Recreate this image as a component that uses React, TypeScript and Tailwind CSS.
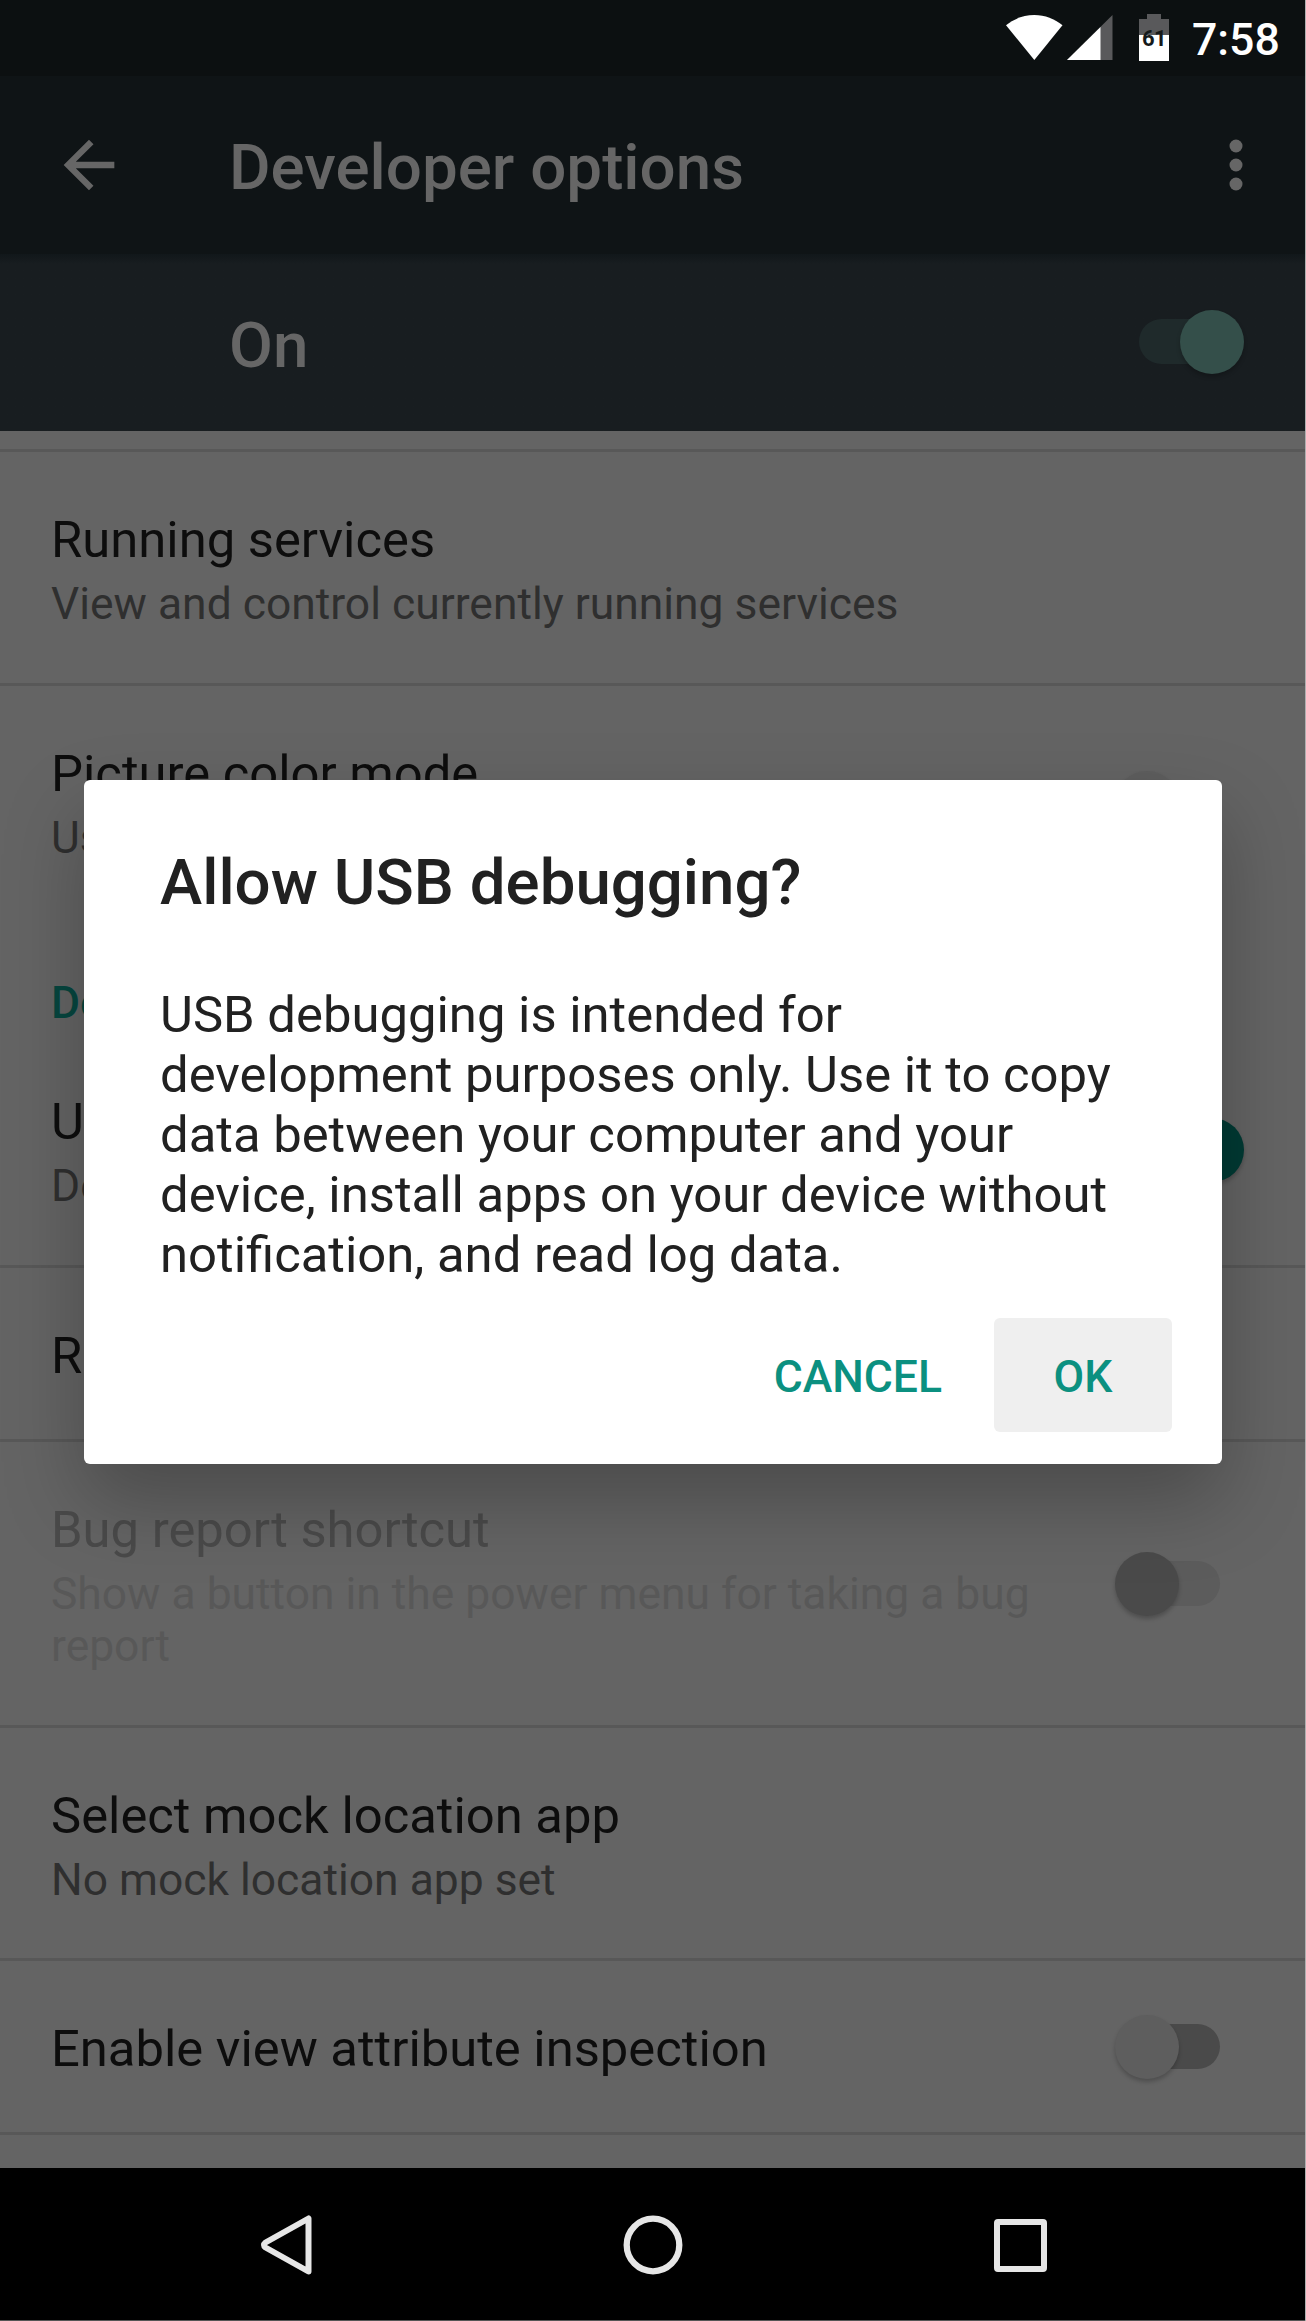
import React from "react";

type SwitchState = "header" | "on" | "off" | "disabled";

const thumbStyles: Record<SwitchState, string> = {
  header: "left-[65px] bg-[#344f4a]",
  on: "left-[65px] bg-[#003a34]",
  off: "left-0 bg-[#5e5e5e]",
  disabled: "left-0 bg-[#4a4a4a]",
};

const trackStyles: Record<SwitchState, string> = {
  header: "bg-[#1f2a2b]",
  on: "bg-[#4a5a58]",
  off: "bg-[#4a4a4a]",
  disabled: "bg-[#5c5c5c]",
};

function Switch({ state }: { state: SwitchState }) {
  return (
    <div className="relative h-16 w-[129px] shrink-0">
      <div className={`absolute top-[9px] left-[24px] h-[45px] w-[81px] rounded-full ${trackStyles[state]}`} />
      <div
        className={`absolute top-0 size-16 rounded-full shadow-[0_3px_4px_rgba(0,0,0,0.22)] ${thumbStyles[state]}`}
      />
    </div>
  );
}

interface RowProps {
  title: string;
  summary?: string;
  toggle?: SwitchState;
  disabled?: boolean;
  className: string;
}

function Row({ title, summary, toggle, disabled, className }: RowProps) {
  return (
    <div className={`flex shrink-0 justify-between border-[#585858] pr-[61px] pl-[51px] ${className}`}>
      <div className="w-[1010px] pt-[58px]">
        <div className={`text-[50.75px] leading-[60px] ${disabled ? "text-[#4a4a4a]" : "text-[#0d0d0d]"}`}>{title}</div>
        {summary && (
          <div className={`mt-2 text-[44.4px] leading-[52px] ${disabled ? "text-[#585858]" : "text-[#2f2f2f]"}`}>
            {summary}
          </div>
        )}
      </div>
      {toggle && (
        <div className="flex items-center">
          <Switch state={toggle} />
        </div>
      )}
    </div>
  );
}

function StatusBar() {
  return (
    <div className="flex h-[76px] bg-[#0c1011] pl-[1006px]">
      <svg className="mt-[15px] h-[46px] w-[57px]" viewBox="0 0 57 46" fill="#fff">
        <path d="M28.3 45 0 10.3C8 3.8 17.5 0 28.3 0S48.500 3.800 56.500 10.300Z" />
      </svg>
      <svg className="mt-[15px] ml-[4px] h-[45px] w-[46px]" viewBox="0 0 46 45">
        <path d="M0 45 45.500 0V45Z" fill="#59595b" />
        <path d="M0 45 33.500 12V45Z" fill="#fff" />
      </svg>
      <div className="relative mt-[14px] ml-[26px] h-[47px] w-[30px]">
        <svg className="h-[47px] w-[30px]" viewBox="0 0 30 47">
          <path d="M0 5H8V0H22V5H30V21H0Z" fill="#59595b" />
          <path d="M0 21H30V47H0Z" fill="#fff" />
        </svg>
        <span className="absolute top-[12px] left-[3px] text-[22px] leading-[26px] font-bold tracking-[-0.5px] text-[#15191a]">
          61
        </span>
      </div>
      <span className="mt-[14px] ml-[23px] text-[44.6px] leading-[52px] font-medium text-white">7:58</span>
    </div>
  );
}

function AppBar() {
  return (
    <div className="flex h-[178px] items-start bg-[#0f1416] pl-[51px]">
      <svg className="mt-[51px] size-[76px]" viewBox="0 0 24 24" fill="#666">
        <path d="M20 11H7.830l5.590-5.590L12 4l-8 8 8 8 1.410-1.410L7.830 13H20v-2z" />
      </svg>
      <h1 className="mt-[55px] ml-[102px] text-[63.7px] leading-[74px] font-medium text-[#666]">Developer options</h1>
      <svg className="mt-[51px] mr-[31px] ml-auto size-[76px]" viewBox="0 0 24 24" fill="#666">
        <circle cx="12" cy="6" r="2.050" />
        <circle cx="12" cy="12" r="2.050" />
        <circle cx="12" cy="18" r="2.050" />
      </svg>
    </div>
  );
}

function MasterSwitchBar() {
  return (
    <div className="flex h-[177px] items-center justify-between bg-[#181d20] bg-linear-to-b from-[#11171a] to-[#181d20] to-[10px] pr-[61px] pb-[2px] pl-[229px]">
      <span className="pt-[8px] text-[63.7px] leading-[74px] font-medium text-[#666]">On</span>
      <Switch state="header" />
    </div>
  );
}

function NavigationBar() {
  return (
    <div className="flex h-[153px] items-center justify-between border-b border-[#555] bg-black pt-[2px] pr-[258px] pl-[260px]">
      <svg className="h-[62px] w-[52px]" viewBox="0 0 52 62" fill="none" stroke="#e6e6e6" strokeWidth="6" strokeLinejoin="round">
        <path d="M48.500 4.500V57.500L5.500 33.500Q2.500 31 5.500 28.500Z" />
      </svg>
      <svg className="size-[60px]" viewBox="0 0 60 60" fill="none" stroke="#e6e6e6" strokeWidth="6.300">
        <circle cx="30" cy="30" r="26.300" />
      </svg>
      <div className="size-[53px] rounded-[4px] border-[6px] border-[#e6e6e6]" />
    </div>
  );
}

function Dialog() {
  return (
    <div
      role="dialog"
      className="absolute top-[780px] left-[84px] flex h-[684px] w-[1138px] flex-col rounded-[6px] bg-white px-[76px] pt-[66px] text-[#212121] shadow-[0_36px_80px_rgba(0,0,0,0.26)]"
    >
      <h2 className="text-[63.6px] leading-[74px] font-medium">Allow USB debugging?</h2>
      <p className="mt-[65px] w-[985px] text-[50.8px] leading-[60px]">
        USB debugging is intended for development purposes only. Use it to copy data between your computer and your
        device, install apps on your device without notification, and read log data.
      </p>
      <div className="mt-[33px] -mr-[26px] flex h-[114px] justify-end gap-[28px] text-[44.5px] leading-[52px] font-medium text-[#0b9080]">
        <button className="flex items-center px-[24px] pt-[4px]">CANCEL</button>
        <button className="flex w-[178px] items-center justify-center rounded-[6px] bg-[#efefef] pt-[4px]">OK</button>
      </div>
    </div>
  );
}

export default function App() {
  return (
    <div className="relative flex h-[2321px] w-[1306px] flex-col overflow-hidden border-r border-[#b0b0b0] bg-[#646464] font-['Roboto',sans-serif]">
      <StatusBar />
      <AppBar />
      <MasterSwitchBar />
      <div className="flex h-[1737px] flex-col overflow-hidden">
        <div className="h-[21px] shrink-0 border-b-[3px] border-[#585858]" />
        <Row
          className="h-[234px] border-b-[3px]"
          title="Running services"
          summary="View and control currently running services"
        />
        <Row className="h-[234px]" title="Picture color mode" summary="Use sRGB" toggle="off" />
        <div className="h-[114px] shrink-0 pt-[57px] pl-[51px] text-[44.4px] leading-[52px] font-medium text-[#06463f]">
          Debugging
        </div>
        <Row
          className="h-[234px] border-b-[3px]"
          title="USB debugging"
          summary="Debug mode when USB is connected"
          toggle="on"
        />
        <Row className="h-[174px] border-b-[3px]" title="Revoke USB debugging authorizations" />
        <Row
          className="h-[286px] border-b-[3px]"
          title="Bug report shortcut"
          summary="Show a button in the power menu for taking a bug report"
          toggle="disabled"
          disabled
        />
        <Row className="h-[233px] border-b-[3px]" title="Select mock location app" summary="No mock location app set" />
        <Row className="h-[174px] border-b-[3px]" title="Enable view attribute inspection" toggle="off" />
      </div>
      <NavigationBar />
      <Dialog />
    </div>
  );
}
